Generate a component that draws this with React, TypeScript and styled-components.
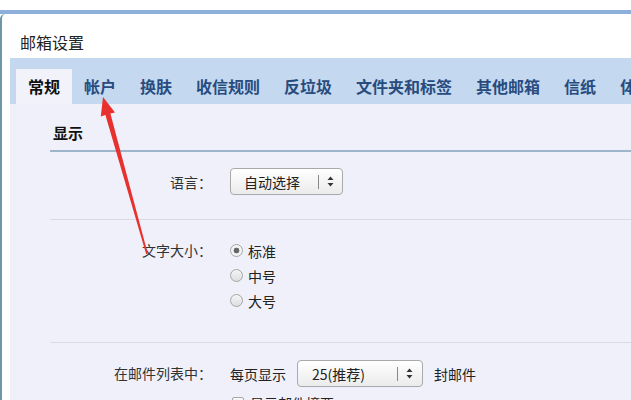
import React, { useState } from "react";
import styled, { createGlobalStyle } from "styled-components";

const GlobalStyle = createGlobalStyle`
  html, body {
    margin: 0;
    padding: 0;
    background: #ffffff;
  }
  body {
    font-family: "Noto Sans CJK SC", "Noto Sans", "Liberation Sans", sans-serif;
  }
`;

const tabs = ["常规", "帐户", "换肤", "收信规则", "反垃圾", "文件夹和标签", "其他邮箱", "信纸", "体验室"];

export default function App() {
  const [active, setActive] = useState(0);
  const [size, setSize] = useState("标准");

  return (
    <Page>
      <GlobalStyle />
      <TopStrip />
      <Window>
        <Title>邮箱设置</Title>
        <TabBar>
          {tabs.map((t, i) => (
            <TabItem key={t} $active={i === active} onClick={() => setActive(i)}>
              {t}
            </TabItem>
          ))}
        </TabBar>
        <Content>
          <SectionHead>显示</SectionHead>

          <Row $pad="16px 0 24px">
            <Label>语言：</Label>
            <Select $width={113} $textPad={13} $sepAt={87}>
              <span>自动选择</span>
              <Sep />
              <Updown />
            </Select>
          </Row>

          <Row $pad="18px 0 29px" $top>
            <Label $lh={25}>文字大小：</Label>
            <RadioList>
              {["标准", "中号", "大号"].map((s) => (
                <RadioLine key={s} onClick={() => setSize(s)}>
                  <RadioDot $checked={size === s} />
                  {s}
                </RadioLine>
              ))}
            </RadioList>
          </Row>

          <Row $pad="17px 0 0" $top $last>
            <Label $lh={26}>在邮件列表中：</Label>
            <Stack>
              <Inline>
                <Plain>每页显示</Plain>
                <Select $width={126} $textPad={14} $sepAt={99}>
                  <span>25(推荐)</span>
                  <Sep />
                  <Updown />
                </Select>
                <Plain>封邮件</Plain>
              </Inline>
              <CheckLine>
                <CheckBox />
                显示邮件摘要
              </CheckLine>
            </Stack>
          </Row>
        </Content>
      </Window>

      <Overlay viewBox="0 0 631 400" width="631" height="400">
        <polygon
          points="103,97 115,112.5 110.4,113.6 147.8,253.8 146.2,254.2 105.4,115 100.8,116.4"
          fill="#e8312e"
        />
      </Overlay>
    </Page>
  );
}

function Updown() {
  return (
    <ArrowIcon width="7" height="11" viewBox="0 0 7 11">
      <path d="M3.5 0.5 L6.5 4 L0.5 4 Z" fill="#333" />
      <path d="M3.5 10.5 L6.5 7 L0.5 7 Z" fill="#333" />
    </ArrowIcon>
  );
}

const Page = styled.div`
  position: relative;
  width: 631px;
  height: 400px;
  overflow: hidden;
  background: #ffffff;
`;

const TopStrip = styled.div`
  height: 10px;
  background: #ffffff;
  border-bottom: 4px solid #8cb0da;
`;

const Window = styled.div`
  height: 386px;
  border-left: 2px solid #6d96a8;
  border-top-left-radius: 5px;
  background: #ffffff;
  overflow: hidden;
`;

const Title = styled.div`
  padding: 20px 0 8px 18px;
  font-size: 16px;
  line-height: 16px;
  color: #222;
`;

const TabBar = styled.div`
  margin-left: 8px;
  height: 46px;
  padding-left: 6px;
  background: #c4d8f0;
  display: flex;
  align-items: flex-end;
  white-space: nowrap;
`;

const TabItem = styled.div<{ $active: boolean }>`
  flex: none;
  height: 35px;
  line-height: 35px;
  padding: 0 12px;
  font-size: 16px;
  font-weight: 700;
  color: ${(p) => (p.$active ? "#111111" : "#284c7e")};
  background: ${(p) => (p.$active ? "#f1f2fa" : "transparent")};
  cursor: pointer;
`;

const Content = styled.div`
  margin-left: 8px;
  height: 300px;
  padding-left: 40px;
  background: #eff0f9;
`;

const SectionHead = styled.div`
  padding: 21px 0 9px 3px;
  font-size: 15px;
  line-height: 16px;
  font-weight: 700;
  color: #111;
  border-bottom: 2px solid #9db6cb;
`;

const Row = styled.div<{ $pad: string; $top?: boolean; $last?: boolean }>`
  display: flex;
  align-items: ${(p) => (p.$top ? "flex-start" : "center")};
  gap: 18px;
  padding: ${(p) => p.$pad};
  border-bottom: ${(p) => (p.$last ? "none" : "1px solid #d9dbe3")};
`;

const Label = styled.div<{ $lh?: number }>`
  width: 162px;
  flex: none;
  text-align: right;
  font-size: 14px;
  line-height: ${(p) => (p.$lh ? `${p.$lh}px` : "20px")};
  color: #333;
`;

const Select = styled.div<{ $width: number; $textPad: number; $sepAt: number }>`
  position: relative;
  width: ${(p) => p.$width}px;
  height: 27px;
  box-sizing: border-box;
  border: 1px solid #a9a9a9;
  border-radius: 4px;
  background: linear-gradient(#ffffff, #ebebeb);
  display: flex;
  align-items: center;
  padding-left: ${(p) => p.$textPad}px;
  font-size: 14px;
  color: #222;
  & > span {
    width: ${(p) => p.$sepAt - p.$textPad}px;
    flex: none;
  }
`;

const Sep = styled.i`
  width: 1px;
  height: 14px;
  background: #888;
  flex: none;
`;

const ArrowIcon = styled.svg`
  margin-left: 8px;
  flex: none;
`;

const RadioList = styled.div`
  display: flex;
  flex-direction: column;
`;

const RadioLine = styled.label`
  display: flex;
  align-items: center;
  height: 25px;
  font-size: 14px;
  color: #222;
  cursor: pointer;
`;

const RadioDot = styled.span<{ $checked: boolean }>`
  width: 13px;
  height: 13px;
  box-sizing: border-box;
  border-radius: 50%;
  border: 1px solid #a6a6a6;
  background: ${(p) =>
    p.$checked
      ? "radial-gradient(circle, #666 0 2.6px, #f3f3f3 3.2px)"
      : "linear-gradient(#f5f5f5, #dedede)"};
  margin-right: 5px;
  flex: none;
`;

const Stack = styled.div`
  display: flex;
  flex-direction: column;
  gap: 6px;
`;

const Inline = styled.div`
  display: flex;
  align-items: center;
  gap: 11px;
`;

const Plain = styled.span`
  font-size: 14px;
  color: #222;
`;

const CheckLine = styled.div`
  display: flex;
  align-items: center;
  font-size: 14px;
  color: #222;
  line-height: 20px;
`;

const CheckBox = styled.span`
  width: 12px;
  height: 12px;
  box-sizing: border-box;
  border: 1px solid #a6a6a6;
  border-radius: 2px;
  background: linear-gradient(#fafafa, #e2e2e2);
  margin: 0 6px 0 2px;
`;

const Overlay = styled.svg`
  position: absolute;
  left: 0;
  top: 0;
  pointer-events: none;
`;
